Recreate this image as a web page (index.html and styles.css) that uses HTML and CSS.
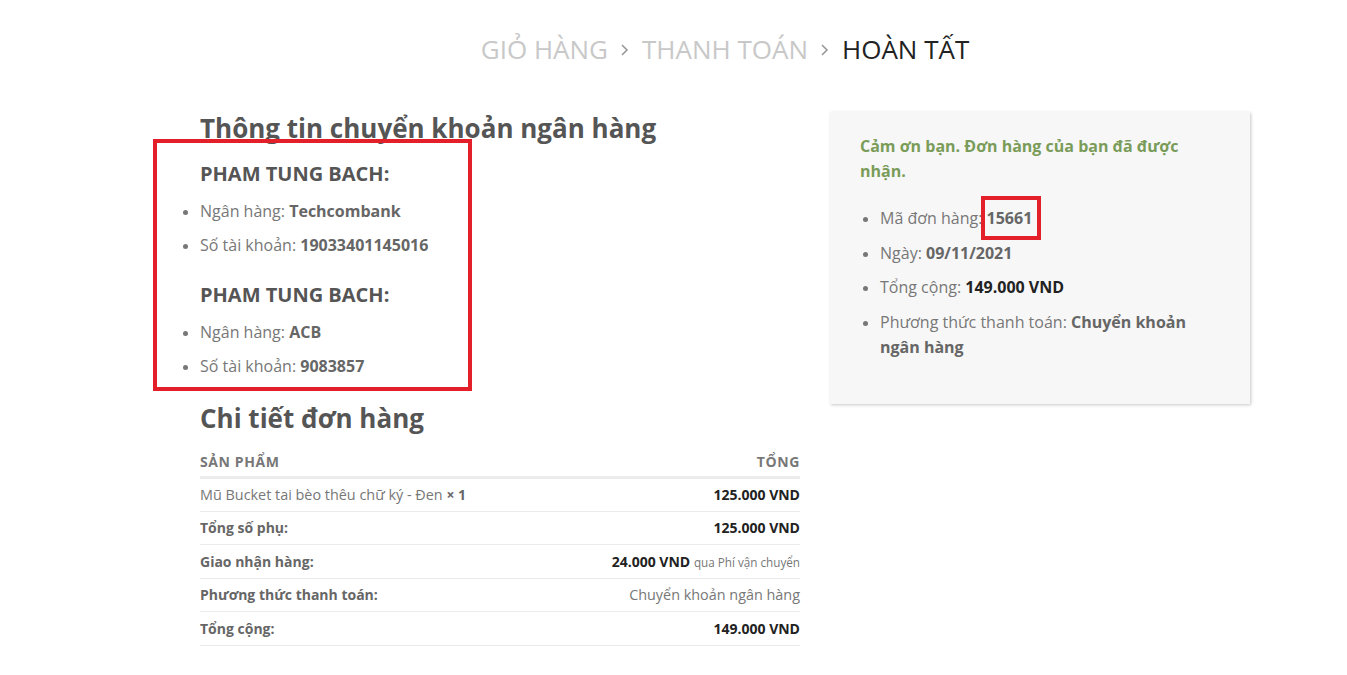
FILE: index.html
```html
<!DOCTYPE html>
<html lang="vi">
<head>
<meta charset="utf-8">
<title>Hoàn tất</title>
<link rel="stylesheet" href="styles.css">
</head>
<body>
<div class="page">
  <nav class="steps">
    <span class="step">GIỎ HÀNG</span>
    <svg class="chev" width="9" height="14" viewBox="0 0 9 14"><path d="M2 2 L7 7 L2 12" fill="none" stroke="#999" stroke-width="1.6"/></svg>
    <span class="step">THANH TOÁN</span>
    <svg class="chev" width="9" height="14" viewBox="0 0 9 14"><path d="M2 2 L7 7 L2 12" fill="none" stroke="#999" stroke-width="1.6"/></svg>
    <span class="step active">HOÀN TẤT</span>
  </nav>

  <div class="cols">
    <div class="left">
      <section class="bank">
        <h2 class="title">Thông tin chuyển khoản ngân hàng</h2>
        <div class="bank-list">
          <div class="mark mark-bank"></div>
          <h3 class="acct">PHAM TUNG BACH:</h3>
          <ul class="info">
            <li>Ngân hàng: <strong>Techcombank</strong></li>
            <li>Số tài khoản: <strong>19033401145016</strong></li>
          </ul>
          <h3 class="acct">PHAM TUNG BACH:</h3>
          <ul class="info">
            <li>Ngân hàng: <strong>ACB</strong></li>
            <li>Số tài khoản: <strong>9083857</strong></li>
          </ul>
        </div>
      </section>

      <section class="details">
        <h2 class="title">Chi tiết đơn hàng</h2>
        <table class="order">
          <thead>
            <tr><th class="l">Sản phẩm</th><th class="r">Tổng</th></tr>
          </thead>
          <tbody>
            <tr><td class="l">Mũ Bucket tai bèo thêu chữ ký - Đen <strong class="qty">× 1</strong></td><td class="r"><strong>125.000 VND</strong></td></tr>
            <tr><th class="l">Tổng số phụ:</th><td class="r"><strong>125.000 VND</strong></td></tr>
            <tr><th class="l">Giao nhận hàng:</th><td class="r"><strong>24.000 VND</strong> <small>qua Phí vận chuyển</small></td></tr>
            <tr><th class="l">Phương thức thanh toán:</th><td class="r">Chuyển khoản ngân hàng</td></tr>
            <tr><th class="l">Tổng cộng:</th><td class="r"><strong>149.000 VND</strong></td></tr>
          </tbody>
        </table>
      </section>
    </div>

    <aside class="right">
      <div class="box">
        <p class="thanks">Cảm ơn bạn. Đơn hàng của bạn đã được nhận.</p>
        <ul class="info summary">
          <li>Mã đơn hàng: <strong class="num">15661<span class="mark mark-num"></span></strong></li>
          <li>Ngày: <strong>09/11/2021</strong></li>
          <li>Tổng cộng: <strong class="dark">149.000 VND</strong></li>
          <li>Phương thức thanh toán: <strong>Chuyển khoản ngân hàng</strong></li>
        </ul>
      </div>
    </aside>
  </div>
</div>
</body>
</html>
```
FILE: styles.css
```css
* { box-sizing: border-box; }
html, body { margin: 0; padding: 0; background: #fff; }
body {
  font-family: "Open Sans", "Noto Sans", sans-serif;
  color: #777;
  font-size: 16px;
}
.page {
  width: 1050px;
  margin-left: 200px;
  padding-top: 30px;
}
.steps {
  display: flex;
  justify-content: center;
  align-items: center;
  gap: 12.5px;
  font-size: 26px;
  line-height: 38px;
  height: 38px;
}
.step { color: #c8c8c8; }
.step.active { color: #222; }
.chev { margin-top: 2px; }

.cols {
  display: flex;
  gap: 30px;
  margin-top: 42px;
  align-items: flex-start;
}
.left { width: 600px; position: relative; }
.right { width: 420px; padding-top: 2px; }

.title {
  font-size: 26px;
  font-weight: 700;
  color: #555;
  margin: 0;
  line-height: 36px;
}
.bank-list { position: relative; padding-top: 13px; }
.acct {
  font-size: 20px;
  font-weight: 700;
  color: #555;
  margin: 0;
  line-height: 30px;
}
.info {
  margin: 6px 0 17px;
  padding-left: 0;
  list-style: none;
}
.bank-list .info:last-child { margin-bottom: 16px; }
.info li {
  position: relative;
  line-height: 25px;
  padding: 4px 0 5px;
  color: #777;
}
.info li::before {
  content: "";
  position: absolute;
  left: -17px;
  top: 15px;
  width: 5px;
  height: 5px;
  border-radius: 50%;
  background: #777;
}
.info strong { color: #666; font-weight: 700; }
.info strong.dark { color: #222; }

.mark {
  position: absolute;
  border: 4px solid #e3202a;
  pointer-events: none;
}
.mark-bank {
  left: -47px;
  top: -7px;
  width: 319px;
  height: 252px;
}
.details .title { margin-bottom: 12px; }

.order {
  width: 100%;
  border-collapse: collapse;
  font-size: 14.4px;
  color: #777;
}
.order th, .order td {
  padding: 0;
  height: 33.5px;
  vertical-align: middle;
  border-bottom: 1px solid #ececec;
}
.order th, .order td strong { font-size: 14px; }
.order thead th {
  text-transform: uppercase;
  font-weight: 700;
  letter-spacing: 0.6px;
  color: #777;
  height: 29.5px;
  padding-bottom: 1px;
  border-bottom: 3px solid #ececec;
}
.order th.l { text-align: left; font-weight: 700; color: #666; }
.order thead th.l, .order thead th.r { color: #777; }
.order .l { text-align: left; }
.order .r { text-align: right; }
.order td strong { color: #222; font-weight: 700; }
.order td strong.qty { color: #666; font-size: 14px; }
.order small { font-size: 11.7px; color: #777; }

.box {
  background: #f7f7f7;
  box-shadow: 1px 1px 3px rgba(0,0,0,0.22);
  padding: 22px 30px 29px;
  min-height: 292px;
}
.thanks {
  margin: 0 0 18px;
  color: #7a9c59;
  font-weight: 700;
  font-size: 16px;
  line-height: 25px;
}
.summary { margin: 0; padding-left: 20px; }
.summary li { padding: 4px 0 5.5px; }
.summary li::before { left: -17px; }
.num { position: relative; }
.mark-num {
  left: -6px;
  top: -11px;
  width: 60px;
  height: 44px;
}
```
